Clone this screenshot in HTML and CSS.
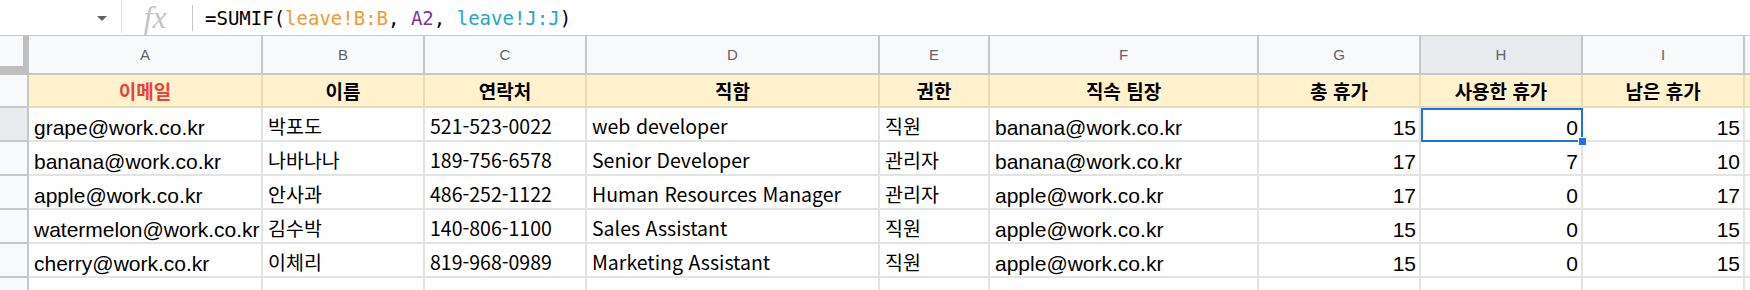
FILE: index.html
```html
<!DOCTYPE html>
<html lang="ko">
<head>
    <meta charset="UTF-8">
    <title>leave - 직원 목록</title>
    <link rel="stylesheet" href="styles.css">
</head>
<body>

    <!-- formula bar -->
    <div class="formula-bar">
        <div class="name-box"><span class="caret"></span></div>
        <div class="fx">fx</div>
        <div class="divider"></div>
        <div class="formula">=SUMIF(<span class="ref-1">leave!B:B</span>, <span class="ref-2">A2</span>, <span class="ref-3">leave!J:J</span>)</div>
    </div>

    <!-- sheet grid -->
    <div class="sheet">
        <div class="corner"></div>
        <div class="col-head">A</div>
        <div class="col-head">B</div>
        <div class="col-head">C</div>
        <div class="col-head">D</div>
        <div class="col-head">E</div>
        <div class="col-head">F</div>
        <div class="col-head">G</div>
        <div class="col-head active">H</div>
        <div class="col-head">I</div>
        <div class="col-head last"></div>

        <div class="row-head"></div>
        <div class="title red">이메일</div>
        <div class="title">이름</div>
        <div class="title">연락처</div>
        <div class="title">직함</div>
        <div class="title">권한</div>
        <div class="title">직속 팀장</div>
        <div class="title">총 휴가</div>
        <div class="title">사용한 휴가</div>
        <div class="title">남은 휴가</div>
        <div class="title last"></div>

        <div class="row-head active"></div>
        <div class="cell">grape@work.co.kr</div>
        <div class="cell ko">박포도</div>
        <div class="cell ko">521-523-0022</div>
        <div class="cell ko">web developer</div>
        <div class="cell ko">직원</div>
        <div class="cell">banana@work.co.kr</div>
        <div class="cell num">15</div>
        <div class="cell num selected">0</div>
        <div class="cell num">15</div>
        <div class="cell last"></div>

        <div class="row-head"></div>
        <div class="cell">banana@work.co.kr</div>
        <div class="cell ko">나바나나</div>
        <div class="cell ko">189-756-6578</div>
        <div class="cell ko">Senior Developer</div>
        <div class="cell ko">관리자</div>
        <div class="cell">banana@work.co.kr</div>
        <div class="cell num">17</div>
        <div class="cell num">7</div>
        <div class="cell num">10</div>
        <div class="cell last"></div>

        <div class="row-head"></div>
        <div class="cell">apple@work.co.kr</div>
        <div class="cell ko">안사과</div>
        <div class="cell ko">486-252-1122</div>
        <div class="cell ko">Human Resources Manager</div>
        <div class="cell ko">관리자</div>
        <div class="cell">apple@work.co.kr</div>
        <div class="cell num">17</div>
        <div class="cell num">0</div>
        <div class="cell num">17</div>
        <div class="cell last"></div>

        <div class="row-head"></div>
        <div class="cell">watermelon@work.co.kr</div>
        <div class="cell ko">김수박</div>
        <div class="cell ko">140-806-1100</div>
        <div class="cell ko">Sales Assistant</div>
        <div class="cell ko">직원</div>
        <div class="cell">apple@work.co.kr</div>
        <div class="cell num">15</div>
        <div class="cell num">0</div>
        <div class="cell num">15</div>
        <div class="cell last"></div>

        <div class="row-head"></div>
        <div class="cell">cherry@work.co.kr</div>
        <div class="cell ko">이체리</div>
        <div class="cell ko">819-968-0989</div>
        <div class="cell ko">Marketing Assistant</div>
        <div class="cell ko">직원</div>
        <div class="cell">apple@work.co.kr</div>
        <div class="cell num">15</div>
        <div class="cell num">0</div>
        <div class="cell num">15</div>
        <div class="cell last"></div>

        <!-- empty row -->
        <div class="row-head"></div>
        <div class="cell"></div>
        <div class="cell"></div>
        <div class="cell"></div>
        <div class="cell"></div>
        <div class="cell"></div>
        <div class="cell"></div>
        <div class="cell"></div>
        <div class="cell"></div>
        <div class="cell"></div>
        <div class="cell last"></div>
    </div>

</body>
</html>
```

FILE: styles.css
```css
body {
    margin: 0;
    background-color: #fff;
    font-family: "Liberation Sans", Arial, sans-serif;
    overflow: hidden;
}

/* formula bar */
.formula-bar {
    display: flex;
    align-items: center;
    height: 36px;
    box-sizing: border-box;
    border-bottom: 1px solid #c7c7c7;
}

.name-box {
    width: 122px;
    height: 33px;
    align-self: flex-start;
    box-sizing: border-box;
    border-right: 1px solid #e0e0e0;
    display: flex;
    align-items: center;
    justify-content: flex-end;
    padding-right: 14px;
}

.caret {
    width: 0;
    height: 0;
    border-left: 5px solid transparent;
    border-right: 5px solid transparent;
    border-top: 5px solid #5f6368;
    margin-top: 3px;
}

.fx {
    width: 70px;
    text-align: center;
    font-family: "Liberation Serif", "DejaVu Serif", serif;
    font-style: italic;
    font-size: 31px;
    line-height: 30px;
    color: #c4c4c4;
    padding-right: 4px;
    box-sizing: border-box;
}

.divider {
    width: 1px;
    height: 26px;
    background-color: #c7c7c7;
}

.formula {
    margin-left: 12px;
    font-family: "DejaVu Sans Mono", monospace;
    font-size: 19px;
    color: #000;
    white-space: nowrap;
}

.ref-1 { color: #f4992f; }
.ref-2 { color: #7e3794; }
.ref-3 { color: #1ea7c8; }

/* sheet grid */
.sheet {
    display: grid;
    grid-template-columns: 29px 234px 162px 162px 293px 110px 269px 162px 162px 162px 1fr;
    grid-template-rows: 39px 33px repeat(6, 34px);
}

.sheet > div {
    box-sizing: border-box;
    display: flex;
    align-items: flex-end;
    min-width: 0;
    white-space: nowrap;
    border-right: 2px solid #e2e3e3;
    border-bottom: 2px solid #e2e3e3;
}

.sheet > .last {
    border-right: none;
}

.corner {
    background-color: #f8f9fa;
    border-right: 6px solid #bfbfbf !important;
    border-bottom: 9px solid #bfbfbf !important;
}

.sheet > .col-head {
    background-color: #f8f9fa;
    border-color: #c7c7c7;
    justify-content: center;
    align-items: center;
    font-size: 15px;
    color: #5f6368;
}

.sheet > .col-head.active,
.sheet > .row-head.active {
    background-color: #e8eaed;
}

.sheet > .row-head {
    background-color: #f8f9fa;
    border-color: #c7c7c7;
}

.sheet > .title {
    background-color: #fff2cc;
    border-color: #e9dcb4;
    justify-content: center;
    font-family: "Noto Sans CJK KR", sans-serif;
    font-weight: bold;
    font-size: 19px;
    line-height: 24px;
    padding-bottom: 3px;
}

.title.red {
    color: #ea4335;
}

.cell {
    font-size: 21px;
    line-height: 24px;
    padding: 0 3px 0 5px;
    color: #000;
}

.cell.ko {
    font-family: "Noto Sans CJK KR", sans-serif;
    font-size: 19.5px;
    padding-bottom: 2px;
}

.cell.num {
    justify-content: flex-end;
}

/* active cell H2 */
.cell.selected {
    position: relative;
}

.cell.selected::before {
    content: "";
    position: absolute;
    top: 0;
    left: 0;
    right: -2px;
    bottom: -2px;
    border: 2px solid #1a73e8;
}

.cell.selected::after {
    content: "";
    position: absolute;
    right: -6px;
    bottom: -6px;
    width: 7px;
    height: 7px;
    background-color: #1a73e8;
    border: 1px solid #fff;
}
```
